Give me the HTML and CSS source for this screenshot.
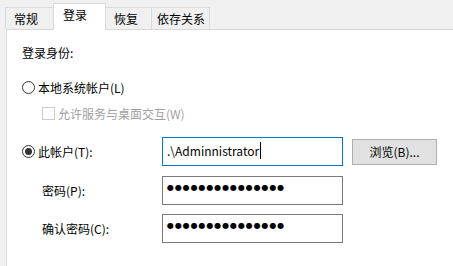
FILE: index.html
```html
<!DOCTYPE html>
<html lang="zh-CN">
<head>
    <meta charset="UTF-8">
    <title>服务属性 - 登录</title>
    <link rel="stylesheet" href="styles.css">
</head>
<body>

    <div class="tabs">
        <div class="tab">常规</div>
        <div class="tab active">登录</div>
        <div class="tab">恢复</div>
        <div class="tab">依存关系</div>
    </div>

    <div class="panel">
        <div class="heading">登录身份:</div>

        <div class="option first">
            <span class="radio"></span>
            <span>本地系统帐户(L)</span>
        </div>
        <div class="option sub disabled">
            <span class="check"></span>
            <span>允许服务与桌面交互(W)</span>
        </div>

        <div class="field account">
            <div class="label">
                <span class="radio checked"></span>
                <span>此帐户(T):</span>
            </div>
            <div class="input focus">.\Adminnistrator<span class="caret"></span></div>
            <button class="browse">浏览(B)...</button>
        </div>
        <div class="field pass">
            <div class="label indent">密码(P):</div>
            <div class="input"><span class="dots">●●●●●●●●●●●●●●●</span></div>
        </div>
        <div class="field pass2">
            <div class="label indent">确认密码(C):</div>
            <div class="input"><span class="dots">●●●●●●●●●●●●●●●</span></div>
        </div>
    </div>

</body>
</html>
```

FILE: styles.css
```css
body {
    margin: 0;
    background-color: #f0f0f0;
    font-family: "Noto Sans CJK SC", "Noto Sans", sans-serif;
    font-size: 12px;
    color: #000;
    overflow: hidden;
}
.tabs {
    display: flex;
    align-items: flex-end;
    height: 29px;
    padding-left: 5px;
}
.tab {
    height: 22px;
    line-height: 21px;
    padding: 0 0 0 8px;
    border: 1px solid #d9d9d9;
    border-bottom: none;
    margin-right: -1px;
    box-sizing: border-box;
    background-color: #f0f0f0;
    white-space: nowrap;
}
.tab:nth-child(1) { width: 49px; }
.tab:nth-child(3) { width: 47px; }
.tab:nth-child(4) { width: 59px; padding-left: 5px; }
.tab.active {
    width: 53px;
    height: 27px;
    line-height: 22px;
    background-color: #fff;
    position: relative;
    z-index: 1;
    margin-bottom: -1px;
    padding-left: 9px;
}
.panel {
    margin-left: 6px;
    border-top: 1px solid #d9d9d9;
    border-left: 1px solid #d9d9d9;
    background-color: #fff;
    height: 240px;
    padding-left: 15px;
}
.heading {
    height: 16px;
    line-height: 16px;
    margin-top: 15px;
}
.option {
    display: flex;
    align-items: center;
    height: 16px;
    gap: 3px;
}
.option.first { margin-top: 18px; }
.option.sub {
    margin-top: 10px;
    padding-left: 20px;
}
.disabled { color: #a0a0a0; }
.radio {
    width: 13px;
    height: 13px;
    box-sizing: border-box;
    border: 1px solid #333;
    border-radius: 50%;
    display: inline-flex;
    align-items: center;
    justify-content: center;
    background-color: #fff;
}
.radio.checked::after {
    content: "";
    width: 7px;
    height: 7px;
    border-radius: 50%;
    background-color: #333;
}
.check {
    width: 13px;
    height: 13px;
    box-sizing: border-box;
    border: 1px solid #cccccc;
    background-color: #fff;
}
.field {
    display: flex;
    align-items: center;
}
.field.account { margin-top: 16px; }
.field.pass { margin-top: 10px; }
.field.pass2 { margin-top: 9px; }
.label {
    width: 140px;
    display: flex;
    align-items: center;
    gap: 3px;
}
.label.indent { padding-left: 20px; box-sizing: border-box; }
.input {
    width: 181px;
    height: 29px;
    box-sizing: border-box;
    border: 1px solid #7a7a7a;
    padding: 4px 4px 0;
    font-size: 12px;
    line-height: 17px;
    display: flex;
    align-items: flex-start;
    align-self: flex-start;
}
.input.focus { border-color: #0078d7; }
.caret {
    width: 1px;
    height: 17px;
    background-color: #000;
    margin-left: 1px;
}
.dots {
    font-family: "DejaVu Sans", sans-serif;
    font-size: 8px;
    letter-spacing: 0.9px;
    line-height: 14px;
}
.browse {
    margin-left: 9px;
    width: 85px;
    height: 26px;
    background-color: #e1e1e1;
    border: 1px solid #adadad;
    font-family: inherit;
    font-size: 12px;
    padding: 0;
    color: #000;
}
```
